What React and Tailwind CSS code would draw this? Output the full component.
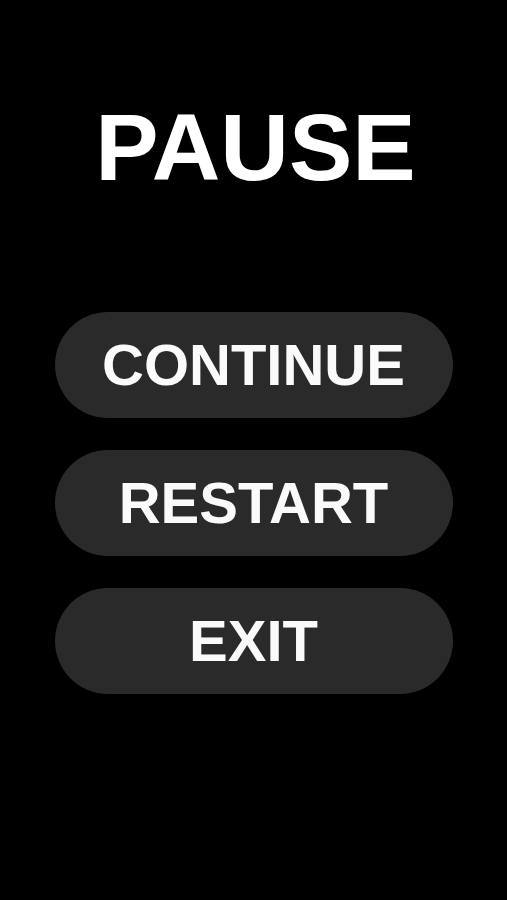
export default function App() {
  const items = ["CONTINUE", "RESTART", "EXIT"];
  return (
    <div
      className="w-full h-[900px] bg-black flex flex-col items-center"
      style={{ fontFamily: '"Liberation Sans", Arial, sans-serif' }}
    >
      <h1 className="mt-[100px] pl-[4px] text-[95px] leading-none font-bold text-white">PAUSE</h1>
      <div className="mt-[117px] flex flex-col gap-[32px]">
        {items.map((t) => (
          <button
            key={t}
            className="w-[398px] h-[106px] rounded-full bg-[#2a2a2a] flex items-center justify-center text-[58px] leading-none font-bold text-[#fafafa]"
          >
            {t}
          </button>
        ))}
      </div>
    </div>
  );
}
